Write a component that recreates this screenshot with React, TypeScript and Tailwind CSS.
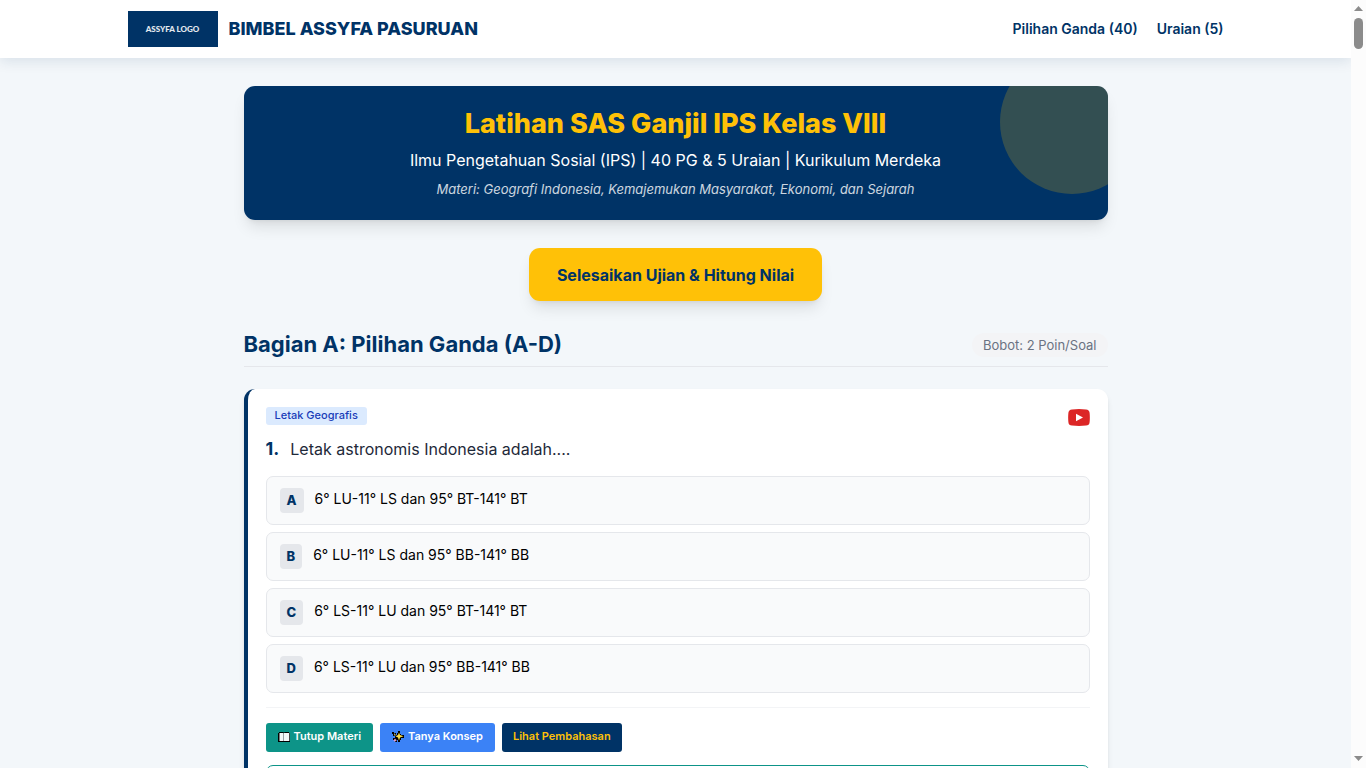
import React from "react";

const options = [
  { letter: "A", text: "6° LU-11° LS dan 95° BT-141° BT" },
  { letter: "B", text: "6° LU-11° LS dan 95° BB-141° BB" },
  { letter: "C", text: "6° LS-11° LU dan 95° BT-141° BT" },
  { letter: "D", text: "6° LS-11° LU dan 95° BB-141° BB" },
];

function Header() {
  return (
    <header className="relative z-10 shrink-0 bg-white shadow-[0_4px_12px_rgba(0,51,102,0.1)]">
      <div className="mx-auto flex max-w-[1154px] items-center justify-between px-[29px] py-[11px]">
        <div className="flex items-center gap-[11px]">
          <div className="flex h-9 w-[90px] items-center justify-center bg-[#003366] font-[Lato,sans-serif] text-[8px] font-black text-white/90">
            ASSYFA LOGO
          </div>
          <span className="text-[18px] leading-[24px] font-extrabold text-[#003366]">BIMBEL ASSYFA PASURUAN</span>
        </div>
        <nav className="flex gap-[19px] text-[14px] leading-[22px] font-semibold text-[#003366]">
          <a href="#pg">Pilihan Ganda (40)</a>
          <a href="#uraian">Uraian (5)</a>
        </nav>
      </div>
    </header>
  );
}

function Banner() {
  return (
    <section className="relative overflow-hidden rounded-[11px] bg-[#003366] p-[22px] text-center text-white">
      <div className="absolute -top-9 -right-9 size-36 rounded-full bg-[#ffc107] opacity-20" />
      <h1 className="text-[27px] leading-[32px] font-extrabold text-[#ffc107]">Latihan SAS Ganjil IPS Kelas VIII</h1>
      <p className="mt-2 text-[16px] leading-[25px]">
        Ilmu Pengetahuan Sosial (IPS) | 40 PG &amp; 5 Uraian | Kurikulum Merdeka
      </p>
      <p className="mt-[7px] text-[13px] leading-[18px] italic opacity-80">
        Materi: Geografi Indonesia, Kemajemukan Masyarakat, Ekonomi, dan Sejarah
      </p>
    </section>
  );
}

function VideoIcon() {
  return (
    <svg viewBox="0 0 22 17" className="h-[17px] w-[22px]" aria-hidden="true">
      <path
        d="M4 .4Q11-.2 18 .4q3.3.2 3.6 3.4.5 4.700 0 9.400-.3 3.200-3.600 3.400-7 .6-14 0Q.7 16.400.4 13.200-.1 8.500.4 3.800.7.600 4 .4z"
        fill="#dc2626"
      />
      <path d="M8 4.800v7.400l7-3.700z" fill="#fff" />
    </svg>
  );
}

function BookIcon() {
  return (
    <svg viewBox="0 0 12 10" className="h-[10px] w-3" aria-hidden="true">
      <path d="M1 0h4.500l.5 1 .5-1H11v1h1v9H0V1h1z" fill="#000" />
      <path d="M1.500 1h4v8h-4zM6 1h5.300v8H6z" fill="#f4f6f7" />
      <path d="M5.500 1.500H6V9h-.500z" fill="#b8c4ca" />
    </svg>
  );
}

function SparklesIcon() {
  return (
    <svg viewBox="0 0 12 12" className="size-3" aria-hidden="true">
      <path d="M0 1h2v1h2v2h1V2h1V0h2v3h1v1h3v3H9v2H8v2H6V9H5v2H3V9H1V7h2V5H1V3H0z" fill="#000" />
      <path d="M7 1.5 8 4l3.500 1.200L8 6.500 7 9.500 6 6.500 3.500 5.200 6 4z" fill="#fde047" />
      <path d="M3 7.500 3.700 8.600 5 9.200 3.700 9.800 3 11 2.400 9.800 1.300 9.200 2.400 8.600z" fill="#f9a8d4" />
      <path d="M2 2.500h1v1h1v1H2z" fill="#a3a06a" />
    </svg>
  );
}

function Question() {
  return (
    <article className="mt-[22px] rounded-[11px] border-l-4 border-[#003366] bg-white p-[18px] shadow-md">
      <div className="flex items-start justify-between">
        <span className="rounded-[3px] bg-blue-100 px-[9px] pb-[2px] text-[11px] leading-[16px] font-medium text-blue-800">
          Letak Geografis
        </span>
        <a href="#video" aria-label="Video pembahasan" className="mt-[2px]">
          <VideoIcon />
        </a>
      </div>
      <div className="mt-[10px] flex items-baseline gap-[11px] leading-[25px]">
        <span className="text-[18px] font-bold text-[#003366]">1.</span>
        <p className="text-[16px] text-gray-800">Letak astronomis Indonesia adalah....</p>
      </div>
      <div className="mt-[14px] flex flex-col gap-[7px]">
        {options.map((o) => (
          <button
            key={o.letter}
            type="button"
            className="flex items-start gap-[11px] rounded-[7px] border border-gray-200 bg-gray-50 px-[13px] py-[11px] text-left text-black"
          >
            <span className="rounded-[4px] bg-gray-200 px-[7px] text-[13px] leading-[25px] font-extrabold text-[#003366]">
              {o.letter}
            </span>
            <span className="text-[14px] leading-[22px]">{o.text}</span>
          </button>
        ))}
      </div>
      <div className="mt-[14px] flex gap-[7px] border-t border-gray-100 pt-[15px] text-[11px] leading-[15px] font-semibold">
        <button type="button" className="flex items-center gap-1 rounded-[3px] bg-[#0d9488] px-3 pt-[6px] pb-[8px] text-white">
          <BookIcon />
          Tutup Materi
        </button>
        <button type="button" className="flex items-center gap-1 rounded-[3px] bg-[#3b82f6] px-3 pt-[6px] pb-[8px] text-white">
          <SparklesIcon />
          Tanya Konsep
        </button>
        <button type="button" className="rounded-[3px] bg-[#003366] px-[11px] pt-[6px] pb-[8px] text-[#ffc107]">
          Lihat Pembahasan
        </button>
      </div>
      <div className="mt-[13px] h-24 rounded-[7px] border border-[#0d9488] bg-white" />
    </article>
  );
}

function ScrollRail() {
  return (
    <div className="flex w-[15px] shrink-0 flex-col items-center justify-between bg-[#fcfcfc] pt-[6px] pb-[7px]" aria-hidden="true">
      <div className="flex flex-col items-center gap-[7px]">
        <svg viewBox="0 0 9 5" className="h-[5px] w-[9px]">
          <path d="M0 5 4.5 0 9 5z" fill="#8b8b8b" />
        </svg>
        <div className="h-[31px] w-[9px] rounded-full bg-[#8b8b8b]" />
      </div>
      <svg viewBox="0 0 9 5" className="h-[5px] w-[9px]">
        <path d="M0 0 4.5 5 9 0z" fill="#8b8b8b" />
      </svg>
    </div>
  );
}

export default function App() {
  return (
    <div className="flex h-screen overflow-hidden bg-[#f3f7fa] font-[Inter,sans-serif]">
      <div className="flex min-w-0 flex-1 flex-col overflow-hidden">
        <Header />
        <main className="mx-auto w-full max-w-[922px] px-[29px] pt-7">
          <div className="rounded-[11px] shadow-lg">
            <Banner />
          </div>
          <div className="mt-7 flex justify-center">
            <button
              type="button"
              className="rounded-[11px] bg-[#ffc107] px-7 pt-[15px] pb-[13px] text-[16px] leading-[25px] font-bold text-[#003366] shadow-lg"
            >
              Selesaikan Ujian &amp; Hitung Nilai
            </button>
          </div>
          <div id="pg" className="mt-[29px] flex items-center justify-between border-b border-gray-200 pb-[7px]">
            <h2 className="text-[22px] leading-[29px] font-bold text-[#003366]">Bagian A: Pilihan Ganda (A-D)</h2>
            <span className="rounded-full bg-gray-100 px-[11px] py-[3px] text-[13px] leading-[18px] text-gray-500">
              Bobot: 2 Poin/Soal
            </span>
          </div>
          <Question />
        </main>
      </div>
      <ScrollRail />
    </div>
  );
}
